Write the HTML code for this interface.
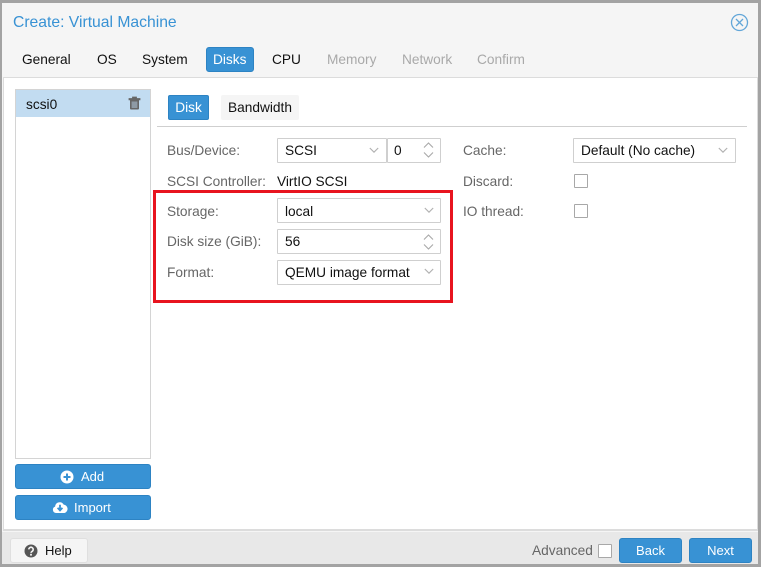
<!DOCTYPE html>
<html><head><meta charset="utf-8">
<style>
html,body{margin:0;padding:0}
body{width:761px;height:567px;overflow:hidden;position:relative;background:#f5f5f5;font-family:"Liberation Sans",sans-serif;font-size:13.7px;color:#111;filter:blur(.3px)}
div,span.a,svg{position:absolute;box-sizing:border-box}
.t{white-space:nowrap;line-height:18px;height:18px}
.tab{top:51px}
.dis{color:#a9a9a9}
.lab{color:#666}
.blue{background:#3892d4;border:1px solid #2d83c3;border-radius:3px;color:#fff;text-align:center}
.field{background:#fff;border:1px solid #cfcfcf;height:25px;border-radius:1px}
.cb{width:14px;height:14px;border:1px solid #a8a8a8;background:#fff;border-radius:1px}
.b{font-size:13px}
</style></head><body>
<!-- outer border -->
<div style="left:0;top:0;width:761px;height:3px;background:#a3a3a3"></div>
<div style="left:0;top:0;width:2px;height:567px;background:#a3a3a3"></div>
<div style="left:758px;top:0;width:3px;height:567px;background:#a3a3a3"></div>
<div style="left:0;top:564px;width:761px;height:3px;background:#a3a3a3"></div>

<div class="t" style="left:13px;top:14px;font-size:15.7px;color:#3892d4">Create: Virtual Machine</div>
<svg style="left:730px;top:13px" width="19" height="19" viewBox="0 0 19 19" fill="none" stroke="#62a6d8" stroke-width="1.3"><circle cx="9.5" cy="9.5" r="8"/><path d="M6 6l7 7M13 6l-7 7"/></svg>

<div class="t tab" style="left:22px">General</div>
<div class="t tab" style="left:97px">OS</div>
<div class="t tab" style="left:142px">System</div>
<div class="blue" style="left:206px;top:47px;width:48px;height:25px"></div>
<div class="t tab" style="left:213px;color:#fff">Disks</div>
<div class="t tab" style="left:272px">CPU</div>
<div class="t tab dis" style="left:327px">Memory</div>
<div class="t tab dis" style="left:402px">Network</div>
<div class="t tab dis" style="left:477px">Confirm</div>

<!-- main body -->
<div style="left:3px;top:77px;width:755px;height:454px;background:#fff;border:1px solid #dcdcdc;border-bottom:2px solid #dcdcdc"></div>
<!-- footer -->
<div style="left:2px;top:532px;width:756px;height:32px;background:#e8e8e8"></div>

<!-- left list -->
<div style="left:15px;top:89px;width:136px;height:370px;background:#fff;border:1px solid #d4d4d4"></div>
<div style="left:16px;top:90px;width:134px;height:27px;background:#c2dcf1"></div>
<div class="t" style="left:26px;top:96px">scsi0</div>
<svg style="left:128px;top:96px" width="13" height="14" viewBox="0 0 13 14"><path d="M1 2.5h11v1.4H1zM4.5 2.5V1h4v1.5" fill="#666" stroke="#666" stroke-width=".8"/><path d="M2 4h9v8.5a1 1 0 0 1-1 1H3a1 1 0 0 1-1-1z" fill="#666"/><path d="M3.600 5.500h5.800v6.500H3.600z" fill="#8e9aa5"/></svg>

<div class="blue" style="left:15px;top:464px;width:136px;height:25px;line-height:23px"></div>
<svg style="left:60px;top:470px" width="14" height="14" viewBox="0 0 14 14"><circle cx="7" cy="7" r="6.5" fill="#fff"/><path d="M3.5 7h7M7 3.5v7" stroke="#3892d4" stroke-width="2"/></svg>
<div class="t b" style="left:81px;top:468px;color:#fff">Add</div>
<div class="blue" style="left:15px;top:495px;width:136px;height:25px"></div>
<svg style="left:52px;top:500px" width="16" height="14" viewBox="0 0 16 14"><path d="M4 13a3.3 3.3 0 0 1-.9-6.4A4.6 4.6 0 0 1 11.7 4.600 4.300 4.300 0 0 1 12.500 13z" fill="#fff"/><path d="M8 4.800v5M5.600 7.800L8 10.400l2.400-2.600" stroke="#3892d4" stroke-width="1.800" fill="none"/></svg>
<div class="t b" style="left:74px;top:499px;color:#fff">Import</div>

<!-- inner tabs -->
<div class="blue" style="left:168px;top:95px;width:41px;height:25px;line-height:23px;border-radius:2px">Disk</div>
<div style="left:221px;top:95px;width:78px;height:25px;background:#f5f5f5;border-radius:2px;text-align:center;line-height:25px">Bandwidth</div>
<div style="left:157px;top:126px;width:590px;height:1px;background:#cfcfcf"></div>

<!-- form -->
<div class="t lab" style="left:167px;top:142px">Bus/Device:</div>
<div class="field" style="left:277px;top:138px;width:110px"></div>
<div class="t" style="left:285px;top:142px">SCSI</div>
<svg style="left:369px;top:147px" width="10" height="7" viewBox="0 0 10 7" fill="none" stroke="#b0b0b0" stroke-width="1.1"><path d="M.8 1l4.2 4.2L9.200 1"/></svg>
<div class="field" style="left:387px;top:138px;width:54px"></div>
<div class="t" style="left:394px;top:142px">0</div>
<svg style="left:423px;top:141px" width="11" height="18" viewBox="0 0 11 18" fill="none" stroke="#a8a8a8" stroke-width="1.1"><path d="M1 6.500l4.500-4.500 4.500 4.500M1 11.500l4.500 4.500 4.500-4.500"/></svg>

<div class="t lab" style="left:167px;top:173px">SCSI Controller:</div>
<div class="t" style="left:277px;top:173px">VirtIO SCSI</div>

<div class="t lab" style="left:167px;top:203px">Storage:</div>
<div class="field" style="left:277px;top:198px;width:164px"></div>
<div class="t" style="left:285px;top:203px">local</div>
<svg style="left:424px;top:207px" width="10" height="7" viewBox="0 0 10 7" fill="none" stroke="#b0b0b0" stroke-width="1.1"><path d="M.8 1l4.2 4.2L9.200 1"/></svg>

<div class="t lab" style="left:167px;top:233px">Disk size (GiB):</div>
<div class="field" style="left:277px;top:229px;width:164px"></div>
<div class="t" style="left:285px;top:233px">56</div>
<svg style="left:423px;top:233px" width="11" height="18" viewBox="0 0 11 18" fill="none" stroke="#a8a8a8" stroke-width="1.1"><path d="M1 6.500l4.500-4.500 4.500 4.500M1 11.500l4.500 4.500 4.500-4.500"/></svg>

<div class="t lab" style="left:167px;top:264px">Format:</div>
<div class="field" style="left:277px;top:260px;width:164px"></div>
<div class="t" style="left:285px;top:264px">QEMU image format</div>
<svg style="left:424px;top:268px" width="10" height="7" viewBox="0 0 10 7" fill="none" stroke="#b0b0b0" stroke-width="1.1"><path d="M.8 1l4.2 4.2L9.200 1"/></svg>

<div class="t lab" style="left:463px;top:142px">Cache:</div>
<div class="field" style="left:573px;top:138px;width:163px"></div>
<div class="t" style="left:581px;top:142px">Default (No cache)</div>
<svg style="left:718px;top:147px" width="10" height="7" viewBox="0 0 10 7" fill="none" stroke="#b0b0b0" stroke-width="1.1"><path d="M.8 1l4.2 4.2L9.200 1"/></svg>

<div class="t lab" style="left:463px;top:173px">Discard:</div>
<div class="cb" style="left:574px;top:174px"></div>
<div class="t lab" style="left:463px;top:203px">IO thread:</div>
<div class="cb" style="left:574px;top:204px"></div>

<!-- red box -->
<div style="left:153px;top:190px;width:300px;height:113px;border:3px solid #e8141f"></div>

<!-- footer -->
<div style="left:10px;top:538px;width:78px;height:25px;background:#f5f5f5;border:1px solid #dfdfdf;border-radius:3px"></div>
<svg style="left:24px;top:544px" width="14" height="14" viewBox="0 0 14 14"><circle cx="7" cy="7" r="6.500" fill="#555"/><path d="M4.800 5.400a2.200 2.200 0 1 1 3.400 1.900c-.8.500-1.200.8-1.200 1.600" fill="none" stroke="#f5f5f5" stroke-width="1.600"/><rect x="6.100" y="9.800" width="1.800" height="1.800" fill="#f5f5f5"/></svg>
<div class="t b" style="left:45px;top:542px">Help</div>
<div class="t" style="left:532px;top:542px;color:#666">Advanced</div>
<div class="cb" style="left:598px;top:544px"></div>
<div class="blue b" style="left:619px;top:538px;width:63px;height:25px;line-height:23px">Back</div>
<div class="blue b" style="left:689px;top:538px;width:63px;height:25px;line-height:23px">Next</div>
</body></html>
